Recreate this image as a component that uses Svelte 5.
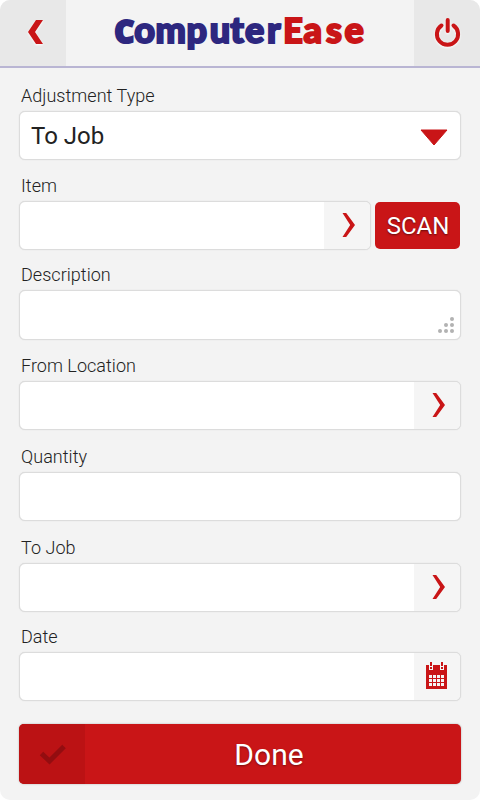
<script lang="ts">
    type Field = {
        label: string;
        kind: string;
        value?: string;
        gap: number;
    };

    const fields: Field[] = [
        { label: "Adjustment Type", kind: "select", value: "To Job", gap: 17 },
        { label: "Item", kind: "scan", gap: 15 },
        { label: "Description", kind: "area", gap: 14 },
        { label: "From Location", kind: "lookup", gap: 15 },
        { label: "Quantity", kind: "text", gap: 16 },
        { label: "To Job", kind: "lookup", gap: 16 },
        { label: "Date", kind: "date", gap: 14 },
    ];
</script>

<div class="backdrop">
    <div class="screen">
        <header>
            <button class="nav" aria-label="Back">
                <svg class="back" width="66" height="66" viewBox="0 0 66 66">
                    <path d="M36 20H43L35 32L43 44H36L28 32Z" />
                </svg>
            </button>
            <svg class="logo" width="348" height="66" viewBox="66 0 348 66">
                <text y="43.4"
                    ><tspan class="navy cap narrow" x="114.2">C</tspan><tspan
                        class="navy"
                        x="134.2 155.6 186.6 209.8 230.3 245 267"
                        >omputer</tspan
                    ><tspan class="red cap" x="283.2">E</tspan><tspan
                        class="red"
                        x="303.5 326 344.6">ase</tspan
                    ></text
                >
            </svg>
            <button class="nav" aria-label="Log out">
                <svg class="power" width="66" height="66" viewBox="414 0 66 66">
                    <path d="M441.5 25.5A10.6 10.6 0 1 0 453.5 25.5M447.7 20V31" />
                </svg>
            </button>
        </header>

        <form>
            {#each fields as field}
                <div class="field" style="margin-top: {field.gap}px">
                    <span class="label">{field.label}</span>
                    <div class="row">
                        <div class="box" class:area={field.kind === "area"}>
                            <span class="value">{field.value ?? ""}</span>
                            {#if field.kind === "select"}
                                <svg class="arrow" width="28" height="18" viewBox="0 0 28 18">
                                    <path d="M1 1H27L14 16Z" />
                                </svg>
                            {:else if field.kind === "scan" || field.kind === "lookup"}
                                <span class="addon">
                                    <svg width="14" height="24" viewBox="0 0 14 24">
                                        <path d="M0.5 0H4.2L13 12L4.2 24H0.5L8.2 12Z" />
                                    </svg>
                                </span>
                            {:else if field.kind === "date"}
                                <span class="addon calendar">
                                    <svg width="21" height="27" viewBox="0 0 21 27">
                                        <path d="M0 3H21V27H0Z" />
                                        <path
                                            class="light"
                                            d="M3 0H7V8H3ZM14 0H18V8H14ZM3 13h3v3h-3zM7 13h3v3h-3zM11 13h3v3h-3zM15 13h3v3h-3zM3 17h3v3h-3zM7 17h3v3h-3zM11 17h3v3h-3zM15 17h3v3h-3zM3 21h3v3h-3zM7 21h3v3h-3zM15 21h3v3h-3zM11 21h3v3h-3z"
                                        />
                                        <path d="M4 0H6V4H4ZM4 5H6V7H4ZM15 0H17V4H15ZM15 5H17V7H15Z" />
                                    </svg>
                                </span>
                            {:else if field.kind === "area"}
                                <svg class="grip" width="16" height="16" viewBox="0 0 16 16">
                                    <circle cx="14" cy="2" r="2" />
                                    <circle cx="8" cy="8" r="2" />
                                    <circle cx="14" cy="8" r="2" />
                                    <circle cx="2" cy="14" r="2" />
                                    <circle cx="8" cy="14" r="2" />
                                    <circle cx="14" cy="14" r="2" />
                                </svg>
                            {/if}
                        </div>
                        {#if field.kind === "scan"}
                            <button class="scan" type="button">SCAN</button>
                        {/if}
                    </div>
                </div>
            {/each}

            <button class="done" type="button">
                <span class="check">
                    <svg width="28" height="21" viewBox="0 0 28 21">
                        <path d="M2.5 9.5L10.5 17L25 2.5" />
                    </svg>
                </span>
                <span class="done-text">Done</span>
            </button>
        </form>
    </div>
</div>

<style>
    :global(body) {
        margin: 0;
    }

    .backdrop {
        width: 480px;
        height: 800px;
        background: #fff;
    }

    .screen {
        box-sizing: border-box;
        height: 800px;
        background: #f3f3f3;
        border-radius: 10px;
        overflow: hidden;
        font-family: Roboto, sans-serif;
        color: #222;
    }

    header {
        display: flex;
        height: 66px;
        border-bottom: 2px solid #b9b5d3;
    }

    button {
        border: 0;
        padding: 0;
        font-family: inherit;
        cursor: pointer;
    }

    svg {
        display: block;
        fill: #c91517;
    }

    .nav {
        width: 66px;
        height: 66px;
        background: #e8e8e8;
    }

    .back,
    .power {
        filter: drop-shadow(0 1px 1px #fff);
    }

    .power path {
        fill: none;
        stroke: #c91517;
        stroke-width: 4;
        stroke-linecap: round;
    }

    .logo text {
        font-family: Lato, sans-serif;
        font-size: 36px;
        font-weight: 900;
        stroke-width: 2;
    }

    .logo .cap {
        font-size: 34px;
    }

    .logo .narrow {
        font-family: "Open Sans", sans-serif;
        font-size: 31px;
        font-weight: 800;
    }

    .navy {
        fill: #2d277f;
        stroke: #2d277f;
    }

    .red {
        fill: #c91517;
        stroke: #c91517;
    }

    form {
        display: flex;
        flex-direction: column;
        padding: 0 19px;
    }

    .label {
        display: block;
        height: 26px;
        padding-left: 2px;
        font-size: 18px;
        font-weight: 300;
        line-height: 22px;
        letter-spacing: 0.03px;
    }

    .row {
        display: flex;
        gap: 4px;
    }

    .box {
        display: flex;
        flex: 1;
        align-items: center;
        box-sizing: border-box;
        height: 49px;
        border: 1px solid #dcdcdc;
        border-radius: 6px;
        background: #fff;
        box-shadow: 0 0 1px #ccc;
        overflow: hidden;
    }

    .area {
        height: 50px;
    }

    .value {
        flex: 1;
        padding-left: 11px;
        font-size: 24px;
    }

    .arrow {
        margin: 4px 12.5px 0 0;
    }

    .arrow path {
        stroke: #c91517;
        stroke-width: 1;
        stroke-linejoin: round;
    }

    .addon {
        display: flex;
        align-items: center;
        box-sizing: border-box;
        width: 46px;
        height: 100%;
        padding: 0 0 1px 18px;
        background: #f5f5f5;
    }

    .calendar {
        padding: 0 0 2px 12px;
    }

    .light {
        fill: #f5f5f5;
    }

    .grip {
        align-self: flex-end;
        margin: 0 6px 6px 0;
        fill: #b2b2b2;
    }

    .scan {
        width: 85px;
        height: 47px;
        margin: 1px 1px 0 0;
        padding-left: 1px;
        border-radius: 5px;
        background: #c91517;
        color: #fff;
        font-size: 24px;
        text-shadow: 0 1px 2px rgba(0, 0, 0, 0.5);
    }

    .done {
        display: flex;
        height: 60px;
        margin-top: 23px;
        border-radius: 5px;
        background: #c91517;
        box-shadow: 0 0 2px #aaa;
        color: #fff;
        overflow: hidden;
    }

    .check {
        display: flex;
        align-items: center;
        justify-content: center;
        box-sizing: border-box;
        width: 66px;
        height: 60px;
        padding-left: 2px;
        background: #bb1214;
    }

    .check path {
        fill: none;
        stroke: #930d10;
        stroke-width: 5;
    }

    .done-text {
        flex: 1;
        padding-right: 8px;
        font-size: 30px;
        line-height: 61px;
        text-align: center;
        text-shadow: 0 1px 2px rgba(0, 0, 0, 0.4);
    }
</style>
